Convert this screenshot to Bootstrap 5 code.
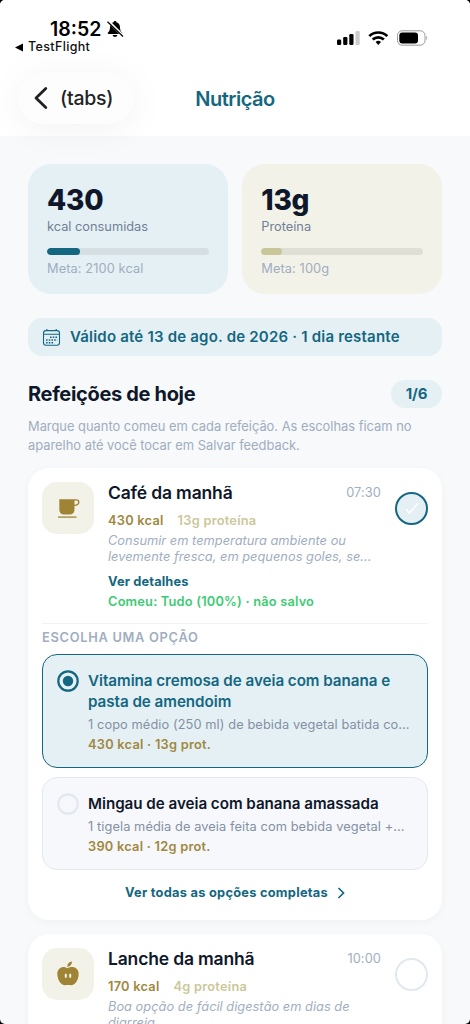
<!DOCTYPE html>
<html lang="pt-BR">
<head>
<meta charset="utf-8">
<meta name="viewport" content="width=device-width, initial-scale=1">
<title>Nutrição</title>
<link href="https://cdn.jsdelivr.net/npm/bootstrap@5.3.0/dist/css/bootstrap.min.css" rel="stylesheet">
<style>
  :root { --teal:#136780; --ice:#e5f0f5; --sand:#f3f2e9; --gold:#a08841; --khaki:#ccc799; --ink:#0f172a; --slate:#718096; --mist:#a0aec0; --bg:#f7f9fb; }
  body { background:#000; font-family:Inter,"Liberation Sans",sans-serif; color:var(--ink); height:1024px; overflow:hidden; }
  .screen { background:var(--bg); height:1024px; border-radius:5px; overflow:hidden; }
  .line { white-space:nowrap; }
  .topbar { background:#fff; height:136px; }
  .status { height:72px; padding:19px 41px 0 14px; }
  .clock { font-size:19.5px; font-weight:600; line-height:20px; margin-left:36px; letter-spacing:0; color:#000; }
  .return-app { font-size:12.5px; font-weight:500; line-height:14px; color:#111; letter-spacing:.35px; margin-top:1px; }
  .back { width:116px; height:52px; margin-left:18px; border-radius:26px; background:#fdfdfd; box-shadow:0 5px 36px rgba(0,0,0,.055); padding-left:16px; gap:12px; font-size:19.5px; font-weight:500; color:#222; letter-spacing:-.25px; }
  .back span { padding-top:2px; }
  .page-title { left:0; right:0; top:87px; font-size:20px; line-height:24px; font-weight:600; color:var(--teal); letter-spacing:-.5px; }
  .content { padding:28px 28px 0; }
  .stat { height:130px; border-radius:23px; padding:20px 19px 0; }
  .ice { background:var(--ice); } .sand { background:var(--sand); }
  .stat-num { font-size:28px; line-height:32px; font-weight:800; letter-spacing:-.2px; }
  .stat-label { font-size:12.8px; line-height:16px; color:var(--slate); margin-top:3px; letter-spacing:0; }
  .meter { height:7px; border-radius:4px; background:#d5dfe3; margin-top:13px; overflow:hidden; }
  .sand .meter { background:#dfdfd6; }
  .meter-fill { height:7px; border-radius:4px; background:var(--teal); }
  .sand .meter-fill { background:#c9c699; }
  .stat-goal { font-size:12.8px; line-height:16px; color:var(--mist); margin-top:6px; letter-spacing:.1px; }
  .validity { height:38px; margin-top:24px; border-radius:14px; padding-left:14px; gap:9px; font-size:15px; font-weight:600; color:var(--teal); letter-spacing:.2px; }
  .valid-text { padding-top:1px; }
  .sec-head { height:28px; margin-top:24px; }
  .sec-title { font-size:20px; line-height:28px; font-weight:700; letter-spacing:-.33px; }
  .count { width:51px; height:28px; border-radius:14px; font-size:15px; line-height:28px; font-weight:700; color:var(--teal); text-align:center; letter-spacing:-.2px; }
  .hint { font-size:12.9px; line-height:18.7px; color:var(--mist); margin-top:10px; letter-spacing:-.01px; }
  .meal { background:#fff; border-radius:21px; box-shadow:0 2px 8px rgba(15,23,42,.035); padding:14px 14px 0; }
  .meal-icon { width:52px; height:52px; border-radius:15px; flex:none; }
  .meal-main { margin-left:-2px; }
  .meal-title { font-size:17.5px; line-height:22px; font-weight:600; letter-spacing:-.17px; }
  .meal-time { font-size:12.8px; line-height:22px; color:var(--mist); letter-spacing:.1px; }
  .macros { font-size:12.8px; line-height:16px; font-weight:600; gap:14px; color:var(--gold); margin-top:9px; letter-spacing:.25px; }
  .macros .prot { color:var(--khaki); }
  .note { font-size:12.8px; line-height:15.4px; font-style:italic; color:var(--mist); margin-top:4px; letter-spacing:.02px; }
  .details { font-size:12.8px; line-height:16px; font-weight:700; color:var(--teal); margin-top:10px; letter-spacing:.15px; }
  .eaten { font-size:12.8px; line-height:16px; font-weight:600; color:#3ccb74; margin-top:4px; letter-spacing:.2px; }
  .tick { width:33px; height:33px; border-radius:50%; border:2.4px solid #e2e8f0; margin:9.5px 0 0 -2px; flex:none; }
  .tick.done { border-color:var(--teal); background:var(--ice); }
  .choose { border-top:1px solid #f0f3f6; margin-top:13px; padding-top:5px; font-size:12.8px; line-height:17px; font-weight:600; color:var(--mist); letter-spacing:.72px; }
  .option { border:1px solid #e2e8f0; border-radius:15px; background:#f7f8fb; padding:15px 0 0 14px; gap:9px; }
  .option.chosen { border-color:var(--teal); background:var(--ice); }
  .opt-title { font-size:15.2px; line-height:21px; font-weight:600; letter-spacing:-.04px; }
  .chosen .opt-title { color:var(--teal); }
  .opt-text { font-size:12.8px; line-height:17px; color:#8390a4; margin-top:4px; letter-spacing:.09px; }
  .opt-kcal { font-size:12.8px; line-height:17px; font-weight:600; color:var(--gold); margin-top:3px; letter-spacing:.25px; }
  .radio { width:22px; height:22px; flex:none; }
  .see-all { font-size:12.8px; line-height:17px; font-weight:700; color:var(--teal); margin-top:14px; gap:9px; letter-spacing:.27px; }
</style>
</head>
<body>
<div class="screen">
  <header class="topbar position-relative">
    <div class="status d-flex justify-content-between">
      <div>
        <div class="d-flex align-items-center">
          <div class="clock line">18:52</div>
          <svg width="18" height="18" viewBox="0 0 18 18" style="margin-left:5px"><path d="M9 1c.9 0 1.4.6 1.5 1.3 2.300.8 3.400 2.500 3.500 4.900.1 3 .9 4.300 2 5.400.6.7.3 1.400-.6 1.400H2.600c-.9 0-1.200-.7-.6-1.400 1.100-1.100 1.900-2.400 2-5.400C4.100 4.800 5.200 3.100 7.500 2.300 7.600 1.600 8.100 1 9 1zM6.600 15h4.800c-.3 1.300-1.200 2-2.400 2s-2.100-.7-2.400-2z"/><path d="M2.600 1.400 16.600 15.400" stroke="#fff" stroke-width="2.800"/><path d="M1.500 1.700 17 16.500" stroke="#000" stroke-width="1.200"/></svg>
        </div>
        <div class="return-app line d-flex align-items-center"><svg class="me-1" width="10" height="9" viewBox="0 0 10 9"><path d="M1 4.500 9 .6v7.800z"/></svg>TestFlight</div>
      </div>
      <svg width="94" height="17" viewBox="0 0 94 17" style="margin-top:11px"><rect x="2" y="9.500" width="4.200" height="5.500" rx="1.200"/><rect x="8.200" y="7" width="4.200" height="8" rx="1.200"/><rect x="14.300" y="4" width="4.200" height="11" rx="1.200"/><rect x="20.500" y="1" width="4.200" height="14" rx="1.200" fill="#ccc"/><g fill="none" stroke="#000" stroke-width="2.700"><path d="M34.300 6.100a13 13 0 0 1 18 0"/><path d="M37.700 9.500a8.200 8.200 0 0 1 11.200 0"/></g><path d="M40.600 12.100a4 4 0 0 1 5.400 0L43.300 15z"/><rect x="62.500" y=".8" width="27.500" height="14.400" rx="4.600" fill="none" stroke="#999" stroke-width="1"/><rect x="64.300" y="2.500" width="18.700" height="11" rx="3"/><path d="M91.300 5.800q1.900 2.200 0 4.400z" fill="#999"/></svg>
    </div>
    <div class="back d-flex align-items-center line"><svg width="14" height="24" viewBox="0 0 14 24" fill="none" stroke="#222" stroke-width="2.800" stroke-linecap="round" stroke-linejoin="round"><path d="M11.800 2.500 2 12l9.800 9.500"/></svg><span>(tabs)</span></div>
    <div class="page-title position-absolute text-center line">Nutrição</div>
  </header>

  <main class="content">
    <section class="d-flex" style="gap:14.500px">
      <div class="stat ice flex-fill w-50">
        <div class="stat-num line">430</div>
        <div class="stat-label line">kcal consumidas</div>
        <div class="meter"><div class="meter-fill" style="width:20.500%"></div></div>
        <div class="stat-goal line">Meta: 2100 kcal</div>
      </div>
      <div class="stat sand flex-fill w-50">
        <div class="stat-num line">13g</div>
        <div class="stat-label line">Proteína</div>
        <div class="meter"><div class="meter-fill" style="width:13%"></div></div>
        <div class="stat-goal line">Meta: 100g</div>
      </div>
    </section>

    <div class="validity ice d-flex align-items-center line">
      <svg width="19" height="19" viewBox="0 0 19 19" fill="none" stroke="#136780" stroke-width="1.100"><rect x="1.500" y="2.600" width="16" height="14.600" rx="2.500"/><path d="M1.500 6.300h16M4.800 1v1.600M14.200 1v1.600"/><path d="M8 9.200h7.200M4 12h11.200M4 14.700h8.200" stroke-width="1.600" stroke-dasharray="1.600 1.120"/></svg>
      <span class="valid-text">Válido até 13 de ago. de 2026 · 1 dia restante</span>
    </div>

    <div class="sec-head d-flex justify-content-between align-items-center">
      <h2 class="sec-title line m-0">Refeições de hoje</h2>
      <span class="count ice">1/6</span>
    </div>
    <p class="hint line mb-0">Marque quanto comeu em cada refeição. As escolhas ficam no<br>aparelho até você tocar em Salvar feedback.</p>

    <article class="meal" style="margin-top:13px;height:452px">
      <div class="d-flex gap-3">
        <div class="meal-icon sand d-flex align-items-center justify-content-center">
          <svg width="24" height="24" viewBox="0 0 24 24"><path d="M3.300 3.200h15.200v10c0 3.600-2 5.300-5 5.300H8.300c-3 0-5-1.700-5-5.300z" fill="#a08436"/><path d="M18 3.900h2.300c1.700 0 2.500.7 2.500 2.200 0 2.200-1 3.300-4.800 3.300" fill="none" stroke="#a08436" stroke-width="1.400"/><path d="M2 21.100h18.500" stroke="#a08436" stroke-width="1.300"/></svg>
        </div>
        <div class="meal-main flex-grow-1">
          <div class="d-flex justify-content-between"><span class="meal-title line">Café da manhã</span><span class="meal-time">07:30</span></div>
          <div class="macros d-flex line"><span>430 kcal</span><span class="prot">13g proteína</span></div>
          <div class="note line">Consumir em temperatura ambiente ou<br>levemente fresca, em pequenos goles, se...</div>
          <div class="details line">Ver detalhes</div>
          <div class="eaten line">Comeu: Tudo (100%) · não salvo</div>
        </div>
        <div class="tick done d-flex align-items-center justify-content-center"><svg width="18" height="18" viewBox="0 0 18 18" fill="none" stroke="#fff" stroke-width="1.500"><path d="m3 10 3.500 4L15 4"/></svg></div>
      </div>
      <div class="choose line">ESCOLHA UMA OPÇÃO</div>
      <div class="option chosen d-flex" style="height:113.500px;margin-top:8px">
        <svg class="radio" viewBox="0 0 22 22"><circle cx="11" cy="11" r="9.700" fill="none" stroke="#136780" stroke-width="2.200"/><circle cx="11" cy="11" r="5.200" fill="#136780"/></svg>
        <div>
          <div class="opt-title line">Vitamina cremosa de aveia com banana e<br>pasta de amendoim</div>
          <div class="opt-text line">1 copo médio (250 ml) de bebida vegetal batida co...</div>
          <div class="opt-kcal line">430 kcal · 13g prot.</div>
        </div>
      </div>
      <div class="option d-flex" style="height:93px;margin-top:9.500px">
        <svg class="radio" viewBox="0 0 22 22"><circle cx="11" cy="11" r="9.700" fill="none" stroke="#e2e8f0" stroke-width="2.200"/></svg>
        <div>
          <div class="opt-title line">Mingau de aveia com banana amassada</div>
          <div class="opt-text line">1 tigela média de aveia feita com bebida vegetal +...</div>
          <div class="opt-kcal line">390 kcal · 12g prot.</div>
        </div>
      </div>
      <div class="see-all d-flex align-items-center justify-content-center line"><span>Ver todas as opções completas</span><svg width="8" height="12" viewBox="0 0 8 12" fill="none" stroke="#136780" stroke-width="1.700"><path d="m1.500 1 5 5-5 5"/></svg></div>
    </article>

    <article class="meal" style="margin-top:14px;height:200px">
      <div class="d-flex gap-3">
        <div class="meal-icon sand d-flex align-items-center justify-content-center">
          <svg width="26" height="28" viewBox="0 0 26 28" fill="#a08436"><path d="M12.500 8.300c2-1 4.200-1.700 6.500-1 3.600 1.100 5 4.200 4.600 8-.4 4-2.200 7.600-5 9.300-2 1-3.600.3-5.600.3s-3.600.7-5.600-.3c-2.800-1.700-4.600-5.300-5-9.300-.4-3.800 1-6.900 4.600-8 2.300-.7 3.700.1 5.500 1z"/><path d="M12.200 7c0-3 1.600-5 4.800-5.400C17 4.600 15.300 6.500 12.200 7z"/><ellipse cx="10.800" cy="15.800" rx="1.100" ry="2.200" fill="#f3f2e9"/><ellipse cx="15.200" cy="15.800" rx="1.100" ry="2.200" fill="#f3f2e9"/></svg>
        </div>
        <div class="meal-main flex-grow-1">
          <div class="d-flex justify-content-between"><span class="meal-title line">Lanche da manhã</span><span class="meal-time">10:00</span></div>
          <div class="macros d-flex line"><span>170 kcal</span><span class="prot">4g proteína</span></div>
          <div class="note line">Boa opção de fácil digestão em dias de<br>diarreia.</div>
        </div>
        <div class="tick"></div>
      </div>
    </article>
  </main>
</div>
<script src="https://cdn.jsdelivr.net/npm/bootstrap@5.3.0/dist/js/bootstrap.bundle.min.js"></script>
</body>
</html>
